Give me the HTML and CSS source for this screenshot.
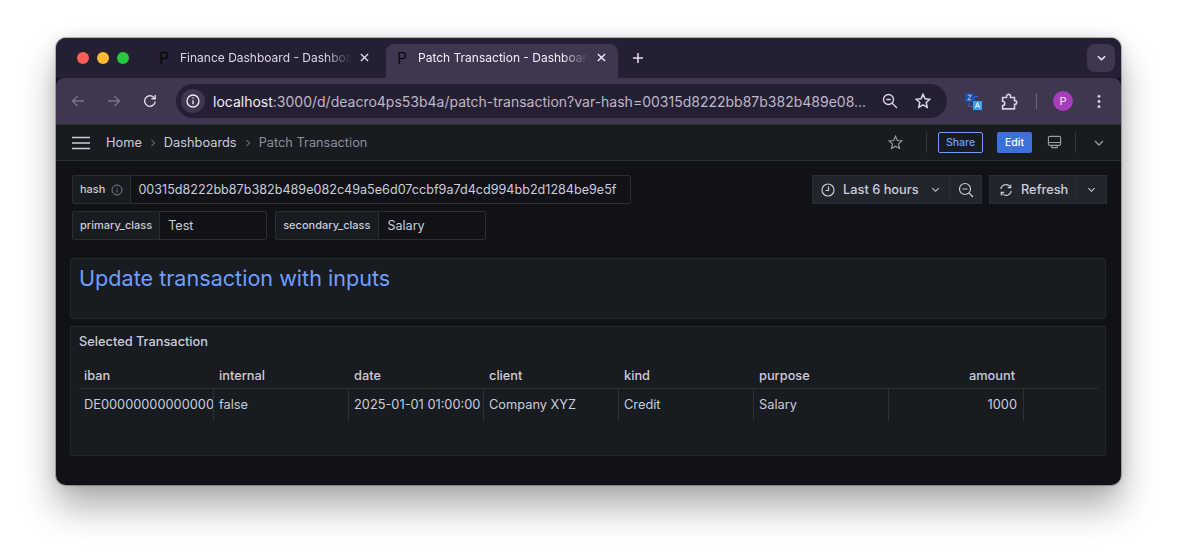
FILE: index.html
```html
<!doctype html>
<html>
<head>
	<title>Patch Transaction - Dashboards</title>
	<link rel="stylesheet" href="styles.css">
</head>
<body>
	<div class="window">
		<div class="tabstrip">
			<div class="lights">
				<span class="light red"></span>
				<span class="light yellow"></span>
				<span class="light green"></span>
			</div>
			<div class="tab">
				<span class="favicon">P</span>
				<span class="tab-title">Finance Dashboard - Dashboards</span>
				<svg class="tab-close" viewBox="0 0 10 10"><path d="M1 1l8 8M9 1l-8 8"/></svg>
			</div>
			<div class="tab active">
				<span class="favicon">P</span>
				<span class="tab-title">Patch Transaction - Dashboards</span>
				<svg class="tab-close" viewBox="0 0 10 10"><path d="M1 1l8 8M9 1l-8 8"/></svg>
			</div>
			<svg class="new-tab" viewBox="0 0 12 12"><path d="M6 1v10M1 6h10"/></svg>
			<div class="tab-menu">
				<svg viewBox="0 0 10 6"><path d="M1 1l4 4 4-4"/></svg>
			</div>
		</div>

		<div class="toolbar">
			<svg class="tool dim" viewBox="0 0 16 16"><path d="M14 8H2.500M7.500 3L2.500 8l5 5"/></svg>
			<svg class="tool dim" viewBox="0 0 16 16"><path d="M2 8h11.500M8.500 3l5 5-5 5"/></svg>
			<svg class="tool" viewBox="0 0 16 16"><path d="M13.200 8.500A5.300 5.300 0 1 1 11.600 4.200L13.200 5.800M13.200 2v3.800H9.400"/></svg>
			<div class="omnibox">
				<span class="site-info">
					<svg viewBox="0 0 14 14"><circle cx="7" cy="7" r="6"/><path d="M7 6.300v4M7 3.500v1.300"/></svg>
				</span>
				<span class="url"><b>localhost</b>:3000/d/deacro4ps53b4a/patch-transaction?var-hash=00315d8222bb87b382b489e08...</span>
				<svg class="omni-icon" viewBox="0 0 16 16"><circle cx="6.500" cy="6.500" r="5"/><path d="M4.300 6.500h4.400M10.200 10.200L15 15"/></svg>
				<svg class="omni-icon star" viewBox="0 0 16 16"><path d="M8 1.300l2 4.500 4.800.5-3.600 3.200 1 4.800L8 11.900l-4.200 2.400 1-4.800L1.200 6.300 6 5.800z"/></svg>
			</div>
			<svg class="translate" viewBox="0 0 17 17">
				<path d="M4 10v3.500h4M9 7V3.500h4" stroke="#2b6fc4" fill="none"/>
				<rect x="0" y="0" width="9" height="9" rx="0.500" fill="#1c4fa8"/>
				<rect x="8" y="8" width="9" height="9" rx="0.500" fill="#3f9fec"/>
				<path d="M2.700 2.200h3.600L2.700 6.800h3.600" stroke="#a9c4ee" fill="none"/>
				<path d="M10.300 15l2.200-5.500 2.200 5.500M11 13.300h3" stroke="#e6f2fd" fill="none"/>
			</svg>
			<svg class="tool puzzle" viewBox="0 0 16 16"><path d="M1.500 4.300h3.700V3.200a1.900 1.900 0 0 1 3.800 0v1.100h3.700v2.900h.4a1.700 1.700 0 0 1 0 3.400h-.4v4.300H1.500v-3.100a2 2 0 0 0 0-4z"/></svg>
			<span class="tool-sep"></span>
			<span class="avatar">P</span>
			<svg class="kebab" viewBox="0 0 4 16"><circle cx="2" cy="2.500" r="1.500"/><circle cx="2" cy="8" r="1.500"/><circle cx="2" cy="13.500" r="1.500"/></svg>
		</div>

		<div class="navbar">
			<svg class="burger" viewBox="0 0 18 14"><path d="M0 1.500h18M0 7h18M0 12.500h18"/></svg>
			<span class="crumb">Home</span>
			<svg class="crumb-sep" viewBox="0 0 6 8"><path d="M1.500 1l3 3-3 3"/></svg>
			<span class="crumb">Dashboards</span>
			<svg class="crumb-sep" viewBox="0 0 6 8"><path d="M1.500 1l3 3-3 3"/></svg>
			<span class="crumb current">Patch Transaction</span>
			<svg class="nav-star" viewBox="0 0 16 16"><path d="M8 1.300l2 4.500 4.800.5-3.600 3.200 1 4.800L8 11.900l-4.200 2.400 1-4.800L1.200 6.300 6 5.800z"/></svg>
			<span class="nav-sep first"></span>
			<span class="btn-share">Share</span>
			<span class="btn-edit">Edit</span>
			<svg class="nav-tv" viewBox="0 0 16 16"><rect x="1.500" y="1.500" width="13" height="9.500" rx="1.500"/><path d="M1.500 8h13M5 11v2.500h6V11"/></svg>
			<span class="nav-sep"></span>
			<svg class="nav-chevron" viewBox="0 0 10 6"><path d="M1 1l4 4 4-4"/></svg>
		</div>

		<div class="content">
			<div class="controls">
				<div class="vars">
					<div class="var-row">
						<div class="var">
							<label class="var-label">hash
								<svg viewBox="0 0 14 14"><circle cx="7" cy="7" r="5.800"/><path d="M7 6.500v3.500M7 4v1"/></svg>
							</label>
							<span class="var-value hash">00315d8222bb87b382b489e082c49a5e6d07ccbf9a7d4cd994bb2d1284be9e5f</span>
						</div>
					</div>
					<div class="var-row">
						<div class="var">
							<label class="var-label">primary_class</label>
							<span class="var-value primary">Test</span>
						</div>
						<div class="var">
							<label class="var-label wide">secondary_class</label>
							<span class="var-value secondary">Salary</span>
						</div>
					</div>
				</div>
				<div class="time-controls">
					<div class="btn-group">
						<span class="btn time">
							<svg class="btn-icon" viewBox="0 0 14 14"><circle cx="7" cy="7" r="6"/><path d="M7.500 3.500V7.500H4.500"/></svg>
							Last 6 hours
							<svg class="btn-chevron" viewBox="0 0 10 6"><path d="M1.500 1l3.500 3.500L8.500 1"/></svg>
						</span>
						<span class="btn zoom-out">
							<svg class="btn-icon" viewBox="0 0 16 16"><circle cx="7" cy="7" r="5.500"/><path d="M4.500 7h5M11 11l4 4"/></svg>
						</span>
					</div>
					<div class="btn-group">
						<span class="btn refresh">
							<svg class="btn-icon" viewBox="0 0 16 16"><path d="M2 7a6 6 0 0 1 10.500-3l1 1.200M13.500 1.800v3.500H10M14 9a6 6 0 0 1-10.500 3l-1-1.200M2.500 14.200v-3.500H6"/></svg>
							Refresh
						</span>
						<span class="btn refresh-menu">
							<svg class="btn-chevron" viewBox="0 0 10 6"><path d="M1.500 1l3.500 3.500L8.500 1"/></svg>
						</span>
					</div>
				</div>
			</div>

			<div class="panel text-panel">
				<h1>Update transaction with inputs</h1>
			</div>

			<div class="panel table-panel">
				<h2>Selected Transaction</h2>
				<div class="table">
					<div class="thead">
						<div class="th">iban</div>
						<div class="th">internal</div>
						<div class="th">date</div>
						<div class="th">client</div>
						<div class="th">kind</div>
						<div class="th">purpose</div>
						<div class="th right">amount</div>
					</div>
					<div class="tr">
						<div class="td">DE00000000000000000</div>
						<div class="td">false</div>
						<div class="td">2025-01-01 01:00:00</div>
						<div class="td">Company XYZ</div>
						<div class="td">Credit</div>
						<div class="td">Salary</div>
						<div class="td right">1000</div>
					</div>
				</div>
			</div>
		</div>
	</div>
</body>
</html>
```

FILE: styles.css
```css
html, body {
	margin: 0;
	padding: 0;
	width: 100%;
	height: 100%;
	overflow: hidden;
	background-color: #fff;
	font-family: "Inter", "Liberation Sans", sans-serif;
}

body {
	padding: 38px 0 0 56px;
	box-sizing: border-box;
}

svg {
	display: block;
	flex: none;
	fill: none;
	stroke: currentColor;
}

.window {
	width: 1065px;
	height: 447px;
	border-radius: 10px;
	overflow: hidden;
	background-color: #111217;
	box-shadow: 0 0 0 1px rgba(0,0,0,.25), 0 22px 36px rgba(0,0,0,.32), 0 0 14px rgba(0,0,0,.12);
	display: flex;
	flex-direction: column;
}

/************** Tab strip ******************/
.tabstrip {
	height: 40px;
	flex: none;
	box-sizing: border-box;
	padding-top: 6px;
	background-color: #251f33;
	display: flex;
	align-items: stretch;
}

.lights {
	display: flex;
	gap: 8px;
	padding: 8px 0 0 21px;
	width: 71px;
}

.light {
	width: 12px;
	height: 12px;
	border-radius: 50%;
}

.light.red { background-color: #ff5f57; }
.light.yellow { background-color: #febc2e; }
.light.green { background-color: #28c840; }

.tab {
	width: 238px;
	box-sizing: border-box;
	padding: 0 15px 7px 11px;
	display: flex;
	align-items: center;
	gap: 9px;
	color: #dcd8e4;
	font-size: 12px;
}

.tab.active {
	width: 232px;
	padding-right: 10px;
	background-color: #3f374f;
	border-radius: 8px 8px 0 0;
	color: #f2f0f5;
}

.favicon {
	width: 12px;
	color: #000;
	font-size: 16px;
	font-weight: 300;
	flex: none;
}

.tab-title {
	flex: 1;
	white-space: nowrap;
	overflow: hidden;
	-webkit-mask-image: linear-gradient(to right, #000 85%, transparent 100%);
	mask-image: linear-gradient(to right, #000 85%, transparent 100%);
}

.tab-close {
	width: 9px;
	height: 9px;
	stroke-width: 1.500;
	margin-right: 2px;
}

.new-tab {
	width: 12px;
	height: 12px;
	margin: 8px 0 0 14px;
	color: #e4e1ea;
	stroke-width: 1.500;
}

.tab-menu {
	margin: 0 6px 0 auto;
	width: 28px;
	height: 28px;
	border-radius: 8px;
	background-color: #3f374f;
	display: flex;
	align-items: center;
	justify-content: center;
	color: #f2f0f5;
}

.tab-menu svg {
	width: 9px;
	height: 6px;
	stroke-width: 1.600;
}

/************** Browser toolbar ******************/
.toolbar {
	height: 46px;
	flex: none;
	box-sizing: border-box;
	background-color: #3f374f;
	border-radius: 8px 8px 0 0;
	display: flex;
	align-items: center;
	padding: 0 14px 0 14px;
	color: #dcd8e4;
}

.tool {
	width: 16px;
	height: 16px;
	stroke-width: 1.400;
	margin-right: 20px;
}

.tool.dim {
	color: #7b7488;
}

.omnibox {
	width: 771px;
	height: 34px;
	margin-left: -2px;
	border-radius: 17px;
	background-color: #251f33;
	display: flex;
	align-items: center;
	padding-left: 5px;
	box-sizing: border-box;
}

.site-info {
	width: 24px;
	height: 24px;
	border-radius: 50%;
	background-color: #3f374f;
	display: flex;
	align-items: center;
	justify-content: center;
	color: #f0eef3;
}

.site-info svg {
	width: 14px;
	height: 14px;
	stroke-width: 1.300;
}

.url {
	margin-left: 8px;
	font-size: 14px;
	color: #bdb8c8;
	white-space: nowrap;
	width: 661px;
	overflow: hidden;
}

.url b {
	font-weight: 400;
	color: #f2f0f5;
}

.omni-icon {
	width: 16px;
	height: 16px;
	stroke-width: 1.300;
	color: #dcd8e4;
	margin-left: 8px;
}

.omni-icon.star {
	margin-left: 17px;
	stroke-width: 1.500;
}

.translate {
	width: 17px;
	height: 17px;
	stroke: none;
	margin-left: 18px;
}

.puzzle {
	margin: 0 0 0 19px;
	width: 17px;
	height: 17px;
	color: #d6d0e0;
	stroke-width: 1.500;
}

.tool-sep {
	width: 1px;
	height: 16px;
	background-color: #6a6379;
	margin-left: 18px;
}

.avatar {
	width: 20px;
	height: 20px;
	margin-left: 16px;
	border-radius: 50%;
	background-color: #a93bbd;
	color: #f4e6f7;
	font-size: 11px;
	display: flex;
	align-items: center;
	justify-content: center;
}

.kebab {
	width: 4px;
	height: 15px;
	margin-left: 24px;
	fill: #dcd8e4;
	stroke: none;
}

/************** Grafana nav ******************/
.navbar {
	height: 37px;
	flex: none;
	box-sizing: border-box;
	background-color: #181b1f;
	border-top: 1px solid #2c2f35;
	border-bottom: 1px solid #2c2f35;
	display: flex;
	align-items: center;
	padding: 0 17px 0 16px;
	font-size: 12.800px;
	color: #ccccdc;
}

.burger {
	width: 18px;
	height: 14px;
	stroke-width: 1.600;
	margin-right: 16px;
}

.crumb.current {
	color: #8e8e9e;
}

.crumb-sep {
	width: 6px;
	height: 8px;
	margin: 0 8px 0 8px;
	color: #8e8e9e;
}

.nav-star {
	width: 15px;
	height: 15px;
	margin-left: auto;
	color: #9a9aa8;
	stroke-width: 1.200;
}

.nav-sep {
	width: 1px;
	height: 21px;
	background-color: #35383e;
	margin-left: 13px;
}

.nav-sep.first {
	margin-left: 23px;
}

.btn-share {
	margin-left: 11px;
	width: 45px;
	height: 21px;
	box-sizing: border-box;
	border: 1px solid #6e9fff;
	border-radius: 2px;
	color: #6e9fff;
	font-size: 10.500px;
	font-weight: 500;
	display: flex;
	align-items: center;
	justify-content: center;
}

.btn-edit {
	margin-left: 14px;
	width: 35px;
	height: 21px;
	border-radius: 2px;
	background-color: #3d71d9;
	color: #fff;
	font-size: 10.500px;
	font-weight: 500;
	display: flex;
	align-items: center;
	justify-content: center;
}

.nav-tv {
	width: 15px;
	height: 15px;
	margin-left: 15px;
	color: #9a9aa8;
	stroke-width: 1.200;
}

.nav-chevron {
	width: 10px;
	height: 6px;
	margin-left: 18px;
	color: #9a9aa8;
	stroke-width: 1.300;
}

/************** Content ******************/
.content {
	flex: 1;
	padding: 14px 15px 0 14px;
}

.controls {
	display: flex;
	justify-content: space-between;
	align-items: flex-start;
	margin: 0 -1px 18px 0;
}

.var-row {
	display: flex;
	gap: 8px;
	margin: 0 0 7px 2px;
}

.var-row:last-child {
	margin-bottom: 0;
}

.var {
	display: flex;
	height: 29px;
	box-sizing: border-box;
	font-size: 12.600px;
	color: #ccccdc;
}

.var-label {
	display: flex;
	gap: 6px;
	padding: 6px 7px 0 7px;
	font-size: 11px;
	font-weight: 500;
	background-color: #181b1f;
	border: 1px solid #2b2d33;
	border-radius: 2px 0 0 2px;
}

.var-label.wide {
	padding-right: 8px;
}

.var-label svg {
	width: 12px;
	height: 12px;
	margin-top: 2px;
	color: #8e8e9e;
	stroke-width: 1;
}

.var-value {
	display: flex;
	align-items: center;
	box-sizing: border-box;
	margin-left: -1px;
	padding-left: 8px;
	background-color: #111217;
	border: 1px solid #2b2d33;
	border-radius: 0 2px 2px 0;
	white-space: nowrap;
}

.var-value.hash { width: 501px; padding-left: 7px; }
.var-value.primary { width: 108px; }
.var-value.secondary { width: 108px; }

.time-controls {
	display: flex;
	gap: 7px;
}

.btn-group {
	display: flex;
}

.btn {
	height: 29px;
	box-sizing: border-box;
	display: flex;
	align-items: center;
	background-color: #22252b;
	border: 1px solid #2b2d33;
	color: #ccccdc;
	font-size: 12.800px;
	font-weight: 500;
}

.btn + .btn {
	margin-left: -1px;
}

.btn-icon {
	width: 14px;
	height: 14px;
	stroke-width: 1.200;
}

.btn-chevron {
	width: 9px;
	height: 6px;
	stroke-width: 1.200;
}

.btn.time { width: 138px; padding-left: 8px; gap: 8px; }
.btn.time .btn-chevron { margin-left: 4px; }
.btn.zoom-out { width: 33px; justify-content: center; }
.btn.zoom-out .btn-icon { width: 16px; height: 16px; }
.btn.refresh { width: 88px; padding-left: 9px; gap: 8px; }
.btn.refresh-menu { width: 31px; justify-content: center; }

.panel {
	background-color: #181b1f;
	border: 1px solid #24262b;
	border-radius: 2px;
	box-sizing: border-box;
}

.text-panel {
	height: 61px;
	padding: 5px 8px;
	margin-bottom: 7px;
}

.text-panel h1 {
	margin: 0;
	font-size: 21.600px;
	line-height: 28px;
	font-weight: 400;
	color: #6e9fff;
}

.table-panel {
	height: 130px;
	padding: 0 7px 0 8px;
}

.table-panel h2 {
	margin: 0;
	padding-top: 7px;
	height: 34px;
	box-sizing: border-box;
	font-size: 12.800px;
	line-height: 15px;
	font-weight: 500;
	color: #ccccdc;
}

.table {
	font-size: 12.800px;
	color: #ccccdc;
}

.thead, .tr {
	display: grid;
	grid-template-columns: repeat(7, 135px) 1fr;
}

.thead {
	height: 28px;
	padding-top: 1px;
	border-bottom: 1px solid #2c2f35;
	box-sizing: border-box;
	font-weight: 500;
	align-items: center;
}

.tr {
	height: 32px;
}

.th {
	padding: 0 9px 0 5px;
}

.td {
	padding: 0 6px 0 5px;
	line-height: 31px;
	border-right: 1px solid #2c2f35;
	white-space: nowrap;
	overflow: hidden;
}

.right {
	text-align: right;
}
```
